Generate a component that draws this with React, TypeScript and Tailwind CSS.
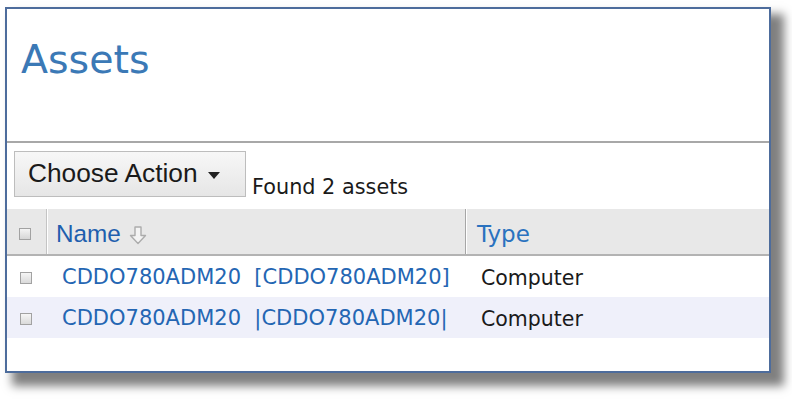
export default function App() {
    const rows = [
        { name: "CDDO780ADM20", alias: "[CDDO780ADM20]", type: "Computer", alt: false },
        { name: "CDDO780ADM20", alias: "|CDDO780ADM20|", type: "Computer", alt: true },
    ];

    return (
        <div className="w-[792px] h-[402px] bg-white overflow-hidden pt-[7px] pl-[5px]">
            <div className="w-[766px] h-[366px] border-2 border-[#4d6c9c] bg-white flex flex-col shadow-[10px_10px_9px_3px_rgba(0,0,0,0.5)]">
                {/* title */}
                <div className="h-[132px] pt-[31px] pl-[14px]">
                    <h1 className="text-[39.5px] leading-none text-[#3b79b6] font-['DejaVu_Sans',sans-serif]">
                        Assets
                    </h1>
                </div>
                <div className="h-[2px] bg-[#a8a8a8]" />

                {/* toolbar */}
                <div className="h-[66px] pt-[8px] pl-[7px] flex items-start">
                    <button className="h-[46px] w-[232px] flex items-center pl-[13px] border border-[#bdbdbd] bg-gradient-to-b from-[#f7f7f7] to-[#e6e6e6] text-[26.3px] text-[#1a1a1a] font-['Liberation_Sans',Arial,sans-serif]">
                        Choose Action
                        <svg width="12" height="7" viewBox="0 0 12 7" className="ml-[10px] mt-[2px]">
                            <path d="M0 0 H12 L6 7 Z" fill="#222" />
                        </svg>
                    </button>
                    <span className="self-end mb-[11px] ml-[6px] text-[20.8px] leading-none text-[#1a1a1a] font-['DejaVu_Sans',sans-serif]">
                        Found 2 assets
                    </span>
                </div>

                {/* header */}
                <div className="h-[47px] flex bg-[#e8e8e8] border-b-2 border-[#b3b3b3]">
                    <div className="w-[39px] flex items-center justify-center">
                        <span className="w-[12px] h-[12px] border border-[#a2a2a2] bg-gradient-to-b from-[#f4f4f4] to-[#d6d6d6] mr-[3px] mt-[4px]" />
                    </div>
                    <div className="w-[1px] bg-[#c4c4c4] border-r border-white box-content" />
                    <div className="w-[417px] flex items-center pl-[8px] pt-[6px] text-[24.3px] text-[#1f5fae] font-['Liberation_Sans',Arial,sans-serif]">
                        Name
                        <svg width="18" height="19" viewBox="0 0 18 19" className="ml-[8px] mt-[2px]">
                            <path
                                d="M6 1 H12 V9.5 H16.5 L9 17.5 L1.5 9.5 H6 Z"
                                fill="#f4f4f4"
                                stroke="#acacac"
                                strokeWidth="1.4"
                                strokeLinejoin="round"
                            />
                        </svg>
                    </div>
                    <div className="w-[1px] bg-[#a6a6a6] border-r border-white box-content" />
                    <div className="flex-1 flex items-center pl-[10px] pt-[6px] text-[23px] text-[#2a72bf] font-['DejaVu_Sans',sans-serif]">
                        Type
                    </div>
                </div>

                {/* rows */}
                {rows.map((r, i) => (
                    <div
                        key={i}
                        className={
                            r.alt
                                ? "h-[41px] flex items-center bg-[#eff0fa]"
                                : "h-[41px] flex items-center bg-white"
                        }
                    >
                        <div className="w-[39px] flex items-center justify-center">
                            <span className="w-[12px] h-[12px] border border-[#a2a2a2] bg-gradient-to-b from-[#f6f6f6] to-[#dadada] mr-[2px] mt-[2px]" />
                        </div>
                        <div className="w-[1px]" />
                        <div className="w-[419px] pl-[15px] pt-[3px] text-[21px] text-[#2466b3] font-['DejaVu_Sans',sans-serif] whitespace-pre">
                            {r.name}
                            {"  "}
                            <span>{r.alias}</span>
                        </div>
                        <div className="pl-[15px] pt-[3px] text-[20.5px] text-[#1a1a1a] font-['DejaVu_Sans',sans-serif]">
                            {r.type}
                        </div>
                    </div>
                ))}
                <div className="flex-1" />
            </div>
        </div>
    );
}
